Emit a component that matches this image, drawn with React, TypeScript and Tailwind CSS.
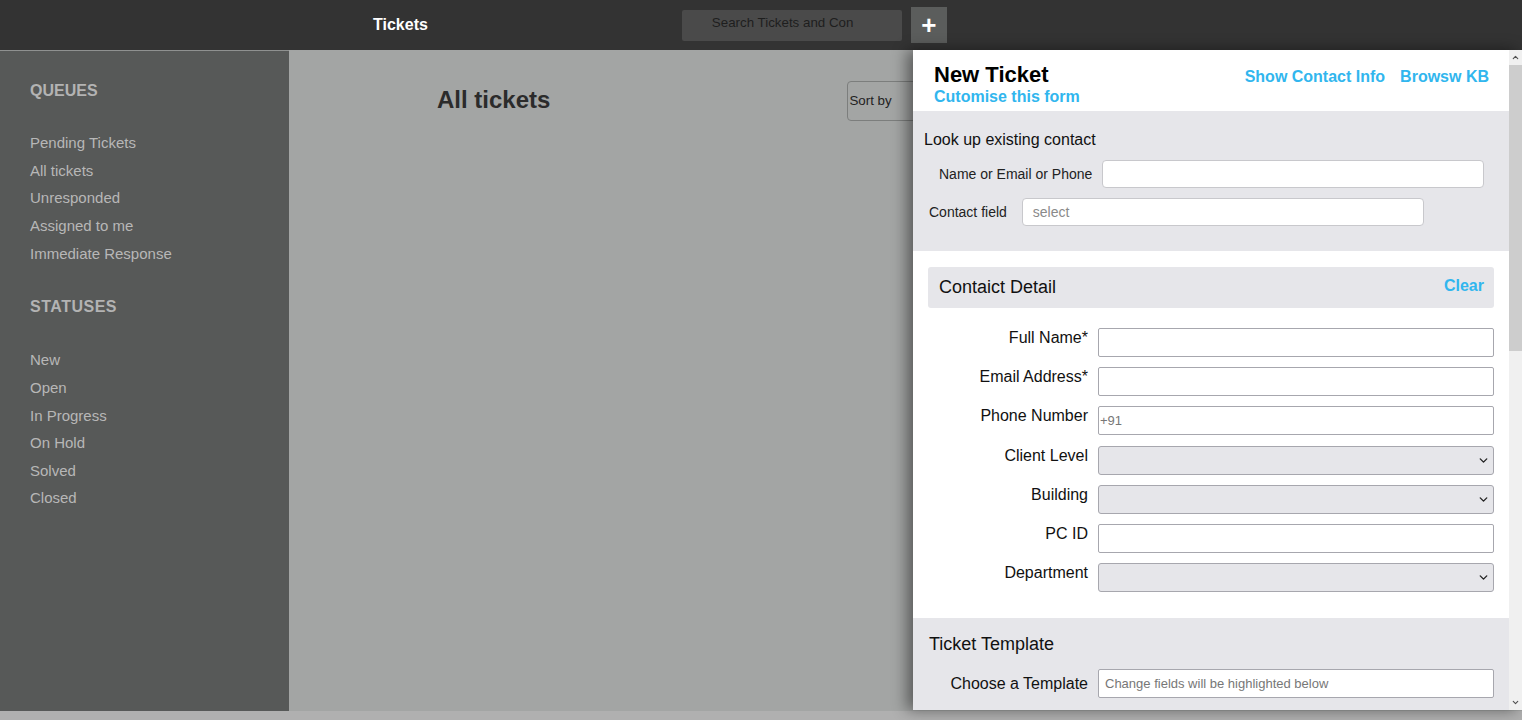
import { ChevronDown, ChevronUp } from 'lucide-react'

const queues = ['Pending Tickets', 'All tickets', 'Unresponded', 'Assigned to me', 'Immediate Response']
const statuses = ['New', 'Open', 'In Progress', 'On Hold', 'Solved', 'Closed']

const contactRows: { label: string; kind: 'text' | 'select'; placeholder?: string }[] = [
    { label: 'Full Name*', kind: 'text' },
    { label: 'Email Address*', kind: 'text' },
    { label: 'Phone Number', kind: 'text', placeholder: '+91' },
    { label: 'Client Level', kind: 'select' },
    { label: 'Building', kind: 'select' },
    { label: 'PC ID', kind: 'text' },
    { label: 'Department', kind: 'select' },
]

function Sidebar() {
    return (
        <aside className="w-[289px] shrink-0 border-t border-[#8f9190] bg-[#575958] pl-[30px] pt-[29px] text-[15px] text-[#b7b7b7]">
            <h3 className="text-[16px] font-bold leading-[22px] text-[#b3b3b3]">QUEUES</h3>
            <ul className="mt-[32px] flex flex-col">
                {queues.map((q) => (
                    <li key={q} className="h-[27.7px] leading-[18px]">
                        {q}
                    </li>
                ))}
            </ul>
            <h3 className="mt-[24px] text-[16px] font-bold leading-[22px] tracking-[0.5px] text-[#b3b3b3]">STATUSES</h3>
            <ul className="mt-[33px] flex flex-col">
                {statuses.map((s) => (
                    <li key={s} className="h-[27.6px] leading-[18px]">
                        {s}
                    </li>
                ))}
            </ul>
        </aside>
    )
}

function FieldRow({ label, kind, placeholder }: { label: string; kind: 'text' | 'select'; placeholder?: string }) {
    return (
        <div className="flex items-start gap-[10px]">
            <div className="w-[160px] shrink-0 pt-[1px] text-right text-[16px] leading-[18px] text-[#111]">{label}</div>
            {kind === 'text' ? (
                <div className="flex h-[29px] flex-1 items-center rounded-[2px] border border-[#a7a7ae] bg-white px-[1px] text-[13px] text-[#777]">
                    {placeholder}
                </div>
            ) : (
                <div className="flex h-[29px] flex-1 items-center justify-end rounded-[3px] border border-[#a7a7ae] bg-[#e6e6ea] pr-[3px]">
                    <ChevronDown className="h-[13px] w-[13px] text-[#222]" strokeWidth={2.5} />
                </div>
            )}
        </div>
    )
}

function Drawer() {
    return (
        <div className="absolute left-[913px] top-[50px] flex h-[660px] w-[609px] bg-white font-['Liberation_Sans',Arial,sans-serif] shadow-[-6px_0_14px_rgba(0,0,0,0.45)]">
            <div className="flex w-[596px] flex-col overflow-hidden">
                {/* header */}
                <div className="flex h-[61px] shrink-0 justify-between bg-white pl-[21px] pr-[20px] pt-[13px]">
                    <div>
                        <div className="text-[22px] font-bold leading-[24px] text-black">New Ticket</div>
                        <div className="text-[16px] font-bold leading-[20px] text-[#31b6ee]">Cutomise this form</div>
                    </div>
                    <div className="flex gap-[15px] pt-[5px] text-[16px] font-bold leading-[18px] text-[#31b6ee]">
                        <span>Show Contact Info</span>
                        <span>Browsw KB</span>
                    </div>
                </div>

                {/* lookup */}
                <div className="h-[140px] shrink-0 bg-[#e6e6ea] pl-[11px] pt-[20px]">
                    <div className="text-[16px] leading-[18px] text-[#111]">Look up existing contact</div>
                    <div className="mt-[11px] flex items-center gap-[10px] pl-[15px]">
                        <span className="text-[14px] text-[#222]">Name or Email or Phone</span>
                        <div className="h-[28px] w-[382px] rounded-[4px] border border-[#c8c8cc] bg-white" />
                    </div>
                    <div className="mt-[10px] flex items-center gap-[15px] pl-[5px]">
                        <span className="text-[14px] text-[#222]">Contact field</span>
                        <div className="flex h-[28px] w-[402px] items-center rounded-[4px] border border-[#c8c8cc] bg-white px-[10px] text-[14px] text-[#8a8a8a]">
                            select
                        </div>
                    </div>
                </div>

                {/* contact detail */}
                <div className="shrink-0 bg-white px-[15px] pb-[26px] pt-[16px]">
                    <div className="flex h-[41px] items-center justify-between rounded-[3px] bg-[#e6e6ea] pl-[11px] pr-[10px]">
                        <span className="text-[18px] text-[#111]">Contaict Detail</span>
                        <span className="-mt-[4px] text-[16px] font-bold text-[#31b6ee]">Clear</span>
                    </div>
                    <div className="mt-[20px] flex flex-col gap-[10.2px]">
                        {contactRows.map((r) => (
                            <FieldRow key={r.label} {...r} />
                        ))}
                    </div>
                </div>

                {/* ticket template */}
                <div className="flex-1 bg-[#e6e6ea] px-[15px] pt-[16px]">
                    <div className="pl-[1px] text-[18px] leading-[20px] text-[#111]">Ticket Template</div>
                    <div className="mt-[15px] flex items-start gap-[10px]">
                        <div className="w-[160px] shrink-0 pt-[6px] text-right text-[16px] leading-[18px] text-[#111]">Choose a Template</div>
                        <div className="flex h-[29px] flex-1 items-center rounded-[2px] border border-[#a7a7ae] bg-white px-[6px] text-[13px] text-[#777]">
                            Change fields will be highlighted below
                        </div>
                    </div>
                </div>
            </div>

            {/* scrollbar */}
            <div className="flex w-[13px] flex-col bg-[#f0f0f0]">
                <div className="flex h-[15px] items-center justify-center">
                    <ChevronUp className="h-[9px] w-[9px] text-[#505050]" strokeWidth={3} />
                </div>
                <div className="h-[286px] bg-[#cdcdcd]" />
                <div className="flex-1" />
                <div className="flex h-[15px] items-center justify-center">
                    <ChevronDown className="h-[9px] w-[9px] text-[#505050]" strokeWidth={3} />
                </div>
            </div>
        </div>
    )
}

export default function App() {
    return (
        <div className="relative flex h-[720px] w-full flex-col overflow-hidden bg-[#b0b0b0] font-['Liberation_Sans',Arial,sans-serif]">
            {/* top bar */}
            <header className="flex h-[50px] shrink-0 items-center bg-[#333333]">
                <div className="w-[373px]" />
                <span className="text-[16px] font-bold text-white">Tickets</span>
                <div className="w-[254px]" />
                <div className="flex h-[31px] w-[220px] items-start rounded-[2px] bg-[#4a4a4a] pl-[30px] pt-[3px] text-[13.33px] text-[#1e1e1e]">
                    Search Tickets and Con
                </div>
                <div className="ml-[9px] flex h-[36px] w-[36px] items-center justify-center bg-[#5b5d5c] text-[26px] font-bold leading-none text-white">
                    +
                </div>
            </header>

            <div className="flex h-[661px] shrink-0">
                <Sidebar />
                <main className="flex flex-1 items-start bg-[#a3a5a4] pt-[31px]">
                    <h1 className="ml-[148px] mt-[4px] text-[24px] font-bold leading-[30px] text-[#2b2b2b]">All tickets</h1>
                    <div className="ml-[297px] flex h-[40px] w-[80px] items-center rounded-[4px] border border-[#7c7e7d] pl-[1px] text-[13.33px] text-[#222]">
                        Sort by
                    </div>
                </main>
            </div>

            <Drawer />
        </div>
    )
}
